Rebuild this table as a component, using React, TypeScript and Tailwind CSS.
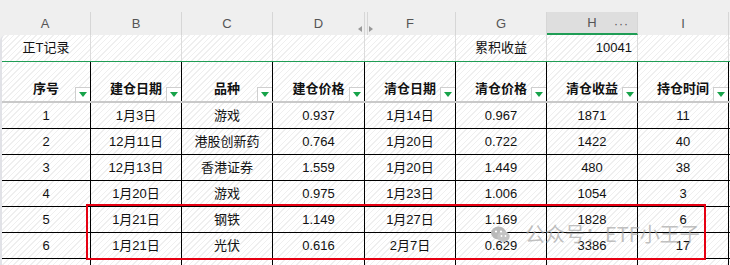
import React from 'react';

// 正T记录 spreadsheet snapshot
const ROWS = [
  ['1', '1月3日', '游戏', '0.937', '1月14日', '0.967', '1871', '11'],
  ['2', '12月11日', '港股创新药', '0.764', '1月20日', '0.722', '1422', '40'],
  ['3', '12月13日', '香港证券', '1.559', '1月20日', '1.449', '480', '38'],
  ['4', '1月20日', '游戏', '0.975', '1月23日', '1.006', '1054', '3'],
  ['5', '1月21日', '钢铁', '1.149', '1月27日', '1.169', '1828', '6'],
  ['6', '1月21日', '光伏', '0.616', '2月7日', '0.629', '3386', '17'],
];

const HEADERS = ['序号', '建仓日期', '品种', '建仓价格', '清仓日期', '清仓价格', '清仓收益', '持仓时间'];
const LETTERS = ['A', 'B', 'C', 'D', 'F', 'G', 'H', 'I'];

const COLS = 'grid grid-cols-[91px_91px_91px_92px_91px_91px_91px_91px]';
const BODY_COLS = 'grid grid-cols-[89px_91px_91px_92px_91px_91px_91px_91px]';
const HATCH =
  'bg-[image:repeating-linear-gradient(135deg,#efefef_0px,#efefef_1px,#ffffff_1px,#ffffff_4px)]';

function FilterButton() {
  return (
    <span className="absolute right-0 bottom-0 w-[15px] h-[14px] bg-white border border-[#cfcfcf] border-r-0 border-b-0 flex items-center justify-center">
      <svg width="8" height="5" viewBox="0 0 8 5">
        <path d="M0 0h8L4 5z" fill="#17a34a" />
      </svg>
    </span>
  );
}

function WeChatIcon() {
  return (
    <svg width="19" height="17" viewBox="0 0 19 17">
      <ellipse cx="7.5" cy="7" rx="7.5" ry="6.5" fill="#b9b9b9" />
      <ellipse cx="12.5" cy="10.5" rx="6.2" ry="5.4" fill="#c4c4c4" />
      <circle cx="5" cy="5.5" r="1.1" fill="#ffffff" />
      <circle cx="10" cy="5.5" r="1.1" fill="#ffffff" />
      <circle cx="10.5" cy="10" r="0.9" fill="#ffffff" />
      <circle cx="14.5" cy="10" r="0.9" fill="#ffffff" />
    </svg>
  );
}

export default function App() {
  return (
    <div className="relative w-[730px] h-[265px] overflow-hidden bg-[#efefef] font-['Liberation_Sans','Noto_Sans_CJK_SC',sans-serif] text-[13px] text-[#111]">
      <div className="h-[12px]" />

      {/* column letters */}
      <div className={`${COLS} h-[23px]`}>
        {LETTERS.map((l, i) => (
          <div
            key={l}
            className={`relative flex items-center justify-center border-r border-[#d6d6d6] text-[#555] ${
              l === 'H' ? 'bg-[#dedede] border-b-2 border-b-[#1f9d55]' : ''
            }`}
          >
            {l}
            {l === 'D' && (
              <span className="absolute right-[2px] top-[14px] w-0 h-0 border-y-[3px] border-y-transparent border-r-[4px] border-r-[#999]" />
            )}
            {l === 'F' && (
              <>
                <span className="absolute left-[2px] top-0 bottom-0 w-px bg-[#d6d6d6]" />
                <span className="absolute left-[4px] top-[14px] w-0 h-0 border-y-[3px] border-y-transparent border-l-[4px] border-l-[#999]" />
              </>
            )}
            {l === 'H' && <span className="absolute right-[8px] top-[3px] text-[#555] tracking-[1px] text-[12px]">···</span>}
          </div>
        ))}
      </div>

      <div className="border-l-2 border-[#e1e2e7] rounded-tl-[6px] bg-white overflow-hidden">
        {/* title row */}
        <div className={`${BODY_COLS} h-[27px] border-b border-[#1f9d55] ${HATCH}`}>
          {['正T记录', '', '', '', '', '累积收益', '10041', ''].map((t, i) => (
            <div
              key={i}
              className={`flex items-center border-r border-[#dcdcdc] ${i === 6 ? 'justify-end pr-[5px]' : 'justify-center'}`}
            >
              {t}
            </div>
          ))}
        </div>

        {/* header row */}
        <div className={`${BODY_COLS} h-[41px] border-b-2 border-[#c9c9c9] ${HATCH}`}>
          {HEADERS.map((h) => (
            <div key={h} className="relative flex items-end justify-center pb-[3px] border-r border-black font-bold">
              {h}
              <FilterButton />
            </div>
          ))}
        </div>

        {/* data rows */}
        {ROWS.map((r) => (
          <div key={r[0]} className={`${BODY_COLS} h-[26px] border-b border-black ${HATCH}`}>
            {r.map((c, i) => (
              <div key={i} className="flex items-center justify-center border-r border-black">
                {c}
              </div>
            ))}
          </div>
        ))}

        <div className={`${BODY_COLS} h-[10px] ${HATCH}`}>
          {LETTERS.map((l) => (
            <div key={l} className="border-r border-black" />
          ))}
        </div>
      </div>

      {/* highlight box */}
      <div className="absolute left-[86px] top-[204px] w-[620px] h-[56px] border-2 border-[#e60012]" />

      {/* watermark */}
      <div className="absolute left-[491px] top-[221px] flex items-center gap-[15px] text-[20px] leading-[26px] text-[#a6a6a6]/70 font-['Noto_Sans_CJK_SC',sans-serif]">
        <WeChatIcon />
        <span>公众号：ETF小王子</span>
      </div>
    </div>
  );
}
